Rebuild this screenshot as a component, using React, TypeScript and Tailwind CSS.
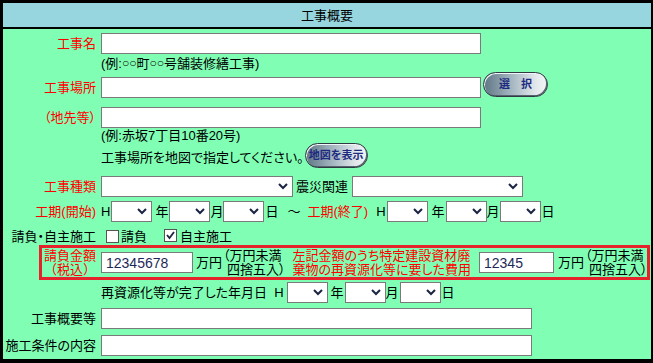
import React from "react";
import clsx from "clsx";

function Label({ children, red, w = "w-[94px]" }: { children: React.ReactNode; red?: boolean; w?: string }) {
  return (
    <div className={clsx("flex h-full shrink-0 items-center justify-end whitespace-nowrap pr-[1px]", w, red ? "text-[#ff0000]" : "text-black")}>
      {children}
    </div>
  );
}

function TextBox({ w, value }: { w: string; value?: string }) {
  return (
    <input
      readOnly
      value={value ?? ""}
      className={clsx(
        "h-[21px] shrink-0 border border-[#7a7a7a] bg-white px-[4px] text-[14px] text-[#1d2858] outline-none",
        w
      )}
    />
  );
}

function Sel({ w = "w-[41px]" }: { w?: string }) {
  return (
    <div className={clsx("relative h-[21px] shrink-0", w)}>
      <select className="h-full w-full appearance-none border border-[#7a7a7a] bg-white outline-none" />
      <svg className="pointer-events-none absolute right-[5px] top-[7px]" width="10" height="7" viewBox="0 0 10 7">
        <polyline points="1,1 5,5 9,1" fill="none" stroke="#1b2442" strokeWidth="2" />
      </svg>
    </div>
  );
}

function Check({ checked }: { checked?: boolean }) {
  return (
    <span className="relative inline-block h-[13px] w-[13px] shrink-0 border border-[#555] bg-white">
      {checked && (
        <svg className="absolute left-[1px] top-[1px]" width="9" height="9" viewBox="0 0 9 9">
          <polyline points="1,4 3.5,7 8,1" fill="none" stroke="#1b2442" strokeWidth="1.8" />
        </svg>
      )}
    </span>
  );
}

function PillButton({ children, w }: { children: React.ReactNode; w: string }) {
  return (
    <button
      className={clsx(
        "flex h-[25px] shrink-0 items-center justify-center rounded-full border border-[#2f3a44] bg-[linear-gradient(to_right,#5f7684,#9fb1bc_40%,#dfe6ea_80%,#f4f6f7)] text-[11px] font-bold text-[#1d2a80] shadow-[inset_1px_1px_0_#f2f5f7,inset_-1px_-1px_0_#56636d]",
        w
      )}
    >
      {children}
    </button>
  );
}

function RoundNote() {
  return (
    <div className="flex shrink-0 flex-col leading-[14px]">
      <span>（万円未満</span>
      <span className="pl-[4px]">四捨五入）</span>
    </div>
  );
}

export default function App() {
  return (
    <div className="h-[363px] w-[653px] whitespace-nowrap bg-black pb-[4px] pl-[3px] pr-[2px] pt-[3px] font-['Liberation_Sans','Noto_Sans_CJK_JP',sans-serif] text-[13px] leading-[15px] text-black [font-feature-settings:'palt']">
      <div className="flex h-[24px] items-center justify-center bg-[#97d5df]">工事概要</div>

      <div className="mt-[2px] flex h-[330px] flex-col bg-[#80ffb4]">
        <div className="mt-[4px] flex h-[21px] items-center">
          <Label red>工事名</Label>
          <div className="ml-[4px]">
            <TextBox w="w-[380px]" />
          </div>
        </div>
        <div className="flex h-[18px] items-center pl-[98px]">
          (例:<span className="text-[12px] [font-feature-settings:normal]">○○</span>町
          <span className="text-[12px] [font-feature-settings:normal]">○○</span>号舗装修繕工事)
        </div>

        <div className="flex h-[26px] items-end">
          <div className="h-[21px]">
            <Label red>工事場所</Label>
          </div>
          <div className="ml-[4px]">
            <TextBox w="w-[380px]" />
          </div>
          <div className="mb-[1px] ml-[2px]">
            <PillButton w="w-[65px]">選　択</PillButton>
          </div>
        </div>

        <div className="mt-[9px] flex h-[21px] items-center">
          <Label red>（地先等）</Label>
          <div className="ml-[4px]">
            <TextBox w="w-[380px]" />
          </div>
        </div>
        <div className="flex h-[15px] items-center pl-[98px]">(例:赤坂7丁目10番20号)</div>

        <div className="flex h-[25px] items-center pl-[98px]">
          <span className="pt-[3px]">工事場所を地図で指定してください。</span>
          <div className="ml-[1px]">
            <PillButton w="w-[63px]">地図を表示</PillButton>
          </div>
        </div>

        <div className="mt-[8px] flex h-[21px] items-center">
          <Label red>工事種類</Label>
          <div className="ml-[4px]">
            <Sel w="w-[192px]" />
          </div>
          <span className="ml-[3px]">震災関連</span>
          <div className="ml-[4px]">
            <Sel w="w-[171px]" />
          </div>
        </div>

        <div className="mt-[4px] flex h-[20px] items-center">
          <Label red>工期(開始)</Label>
          <span className="ml-[4px]">H</span>
          <div className="ml-[1px]">
            <Sel />
          </div>
          <span className="ml-[3px]">年</span>
          <div className="ml-[1px]">
            <Sel />
          </div>
          <span>月</span>
          <Sel />
          <span className="ml-[1px]">日</span>
          <span className="ml-[9px]">～</span>
          <span className="ml-[7px] text-[#ff0000]">工期(終了)</span>
          <span className="ml-[8px]">H</span>
          <div className="ml-[1px]">
            <Sel />
          </div>
          <span className="ml-[4px]">年</span>
          <div className="ml-[1px]">
            <Sel />
          </div>
          <span>月</span>
          <Sel />
          <span className="ml-[1px]">日</span>
        </div>

        <div className="mt-[7px] flex h-[17px] items-center">
          <Label>請負・自主施工</Label>
          <div className="ml-[9px] flex items-center">
            <Check />
            <span className="ml-[2px]">請負</span>
            <div className="ml-[17px]">
              <Check checked />
            </div>
            <span className="ml-[3px]">自主施工</span>
          </div>
        </div>

        <div className="ml-[36px] mr-[1px] flex h-[35px] items-center border-[3px] border-[#e5232b]">
          <div className="flex w-[55px] shrink-0 flex-col items-end pr-[1px] leading-[14px] text-[#ff0000]">
            <span>請負金額</span>
            <span className="[font-feature-settings:normal]">（税込）</span>
          </div>
          <div className="ml-[4px] shrink-0">
            <TextBox w="w-[92px]" value="12345678" />
          </div>
          <span className="ml-[3px] shrink-0">万円</span>
          <div className="ml-[1px]">
            <RoundNote />
          </div>
          <div className="ml-[7px] flex shrink-0 flex-col leading-[14px] text-[#ff0000]">
            <span>左記金額のうち特定建設資材廃</span>
            <span>棄物の再資源化等に要した費用</span>
          </div>
          <div className="ml-[8px] shrink-0">
            <TextBox w="w-[75px]" value="12345" />
          </div>
          <span className="ml-[4px] shrink-0">万円</span>
          <div className="ml-[1px]">
            <RoundNote />
          </div>
        </div>

        <div className="mt-[2px] flex h-[21px] items-center pl-[98px]">
          <span className="shrink-0">再資源化等が完了した年月日</span>
          <span className="ml-[7px]">H</span>
          <div className="ml-[3px]">
            <Sel />
          </div>
          <span className="ml-[3px]">年</span>
          <div className="ml-[1px]">
            <Sel />
          </div>
          <span>月</span>
          <div className="ml-[1px]">
            <Sel />
          </div>
          <span className="ml-[1px]">日</span>
        </div>

        <div className="mt-[5px] flex h-[20px] items-center">
          <Label>工事概要等</Label>
          <div className="ml-[4px]">
            <TextBox w="w-[431px]" />
          </div>
        </div>

        <div className="mt-[7px] flex h-[20px] items-center">
          <Label>施工条件の内容</Label>
          <div className="ml-[4px]">
            <TextBox w="w-[431px]" />
          </div>
        </div>
      </div>
    </div>
  );
}
